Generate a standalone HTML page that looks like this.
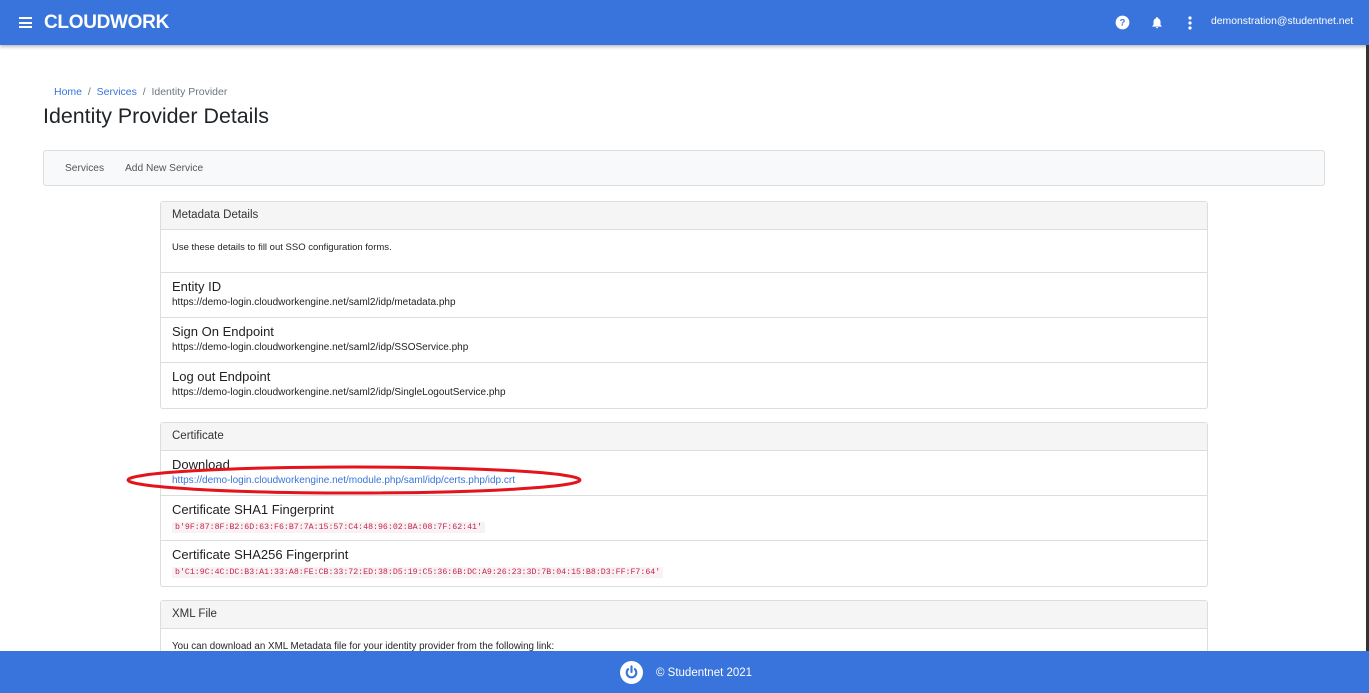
<!DOCTYPE html>
<html><head><style>
*{box-sizing:border-box;margin:0;padding:0}
body{width:1369px;height:693px;overflow:hidden;background:#fff;font-family:"Liberation Sans",sans-serif;color:#212529;position:relative}
.nav{position:absolute;top:0;left:0;width:1369px;height:45px;background:#3874db;box-shadow:0 2px 3px rgba(0,0,0,.25)}
.nav .brand{position:absolute;left:44px;top:12px;color:#fff;font-weight:bold;font-size:19px;letter-spacing:-0.3px}
.ham{position:absolute;left:19px;top:17px;width:13px}
.ham i{display:block;height:2px;background:#fff;margin-bottom:2.5px}
.user{position:absolute;left:1211px;top:16px;color:#fff;font-size:10.4px}
.abs{position:absolute}
.bc{position:absolute;left:54px;top:86px;font-size:10.5px;color:#6c757d}
.bc a{color:#3874db;text-decoration:none}
h1{position:absolute;left:43px;top:104px;font-size:21.4px;font-weight:normal}
.sub{position:absolute;left:43px;top:150px;width:1282px;height:36px;background:#f8f9fa;border:1px solid #ddd;border-radius:3px;font-size:10.2px;color:#555}
.sub span{position:absolute;top:12px}
.panel{position:absolute;left:160px;width:1048px;border:1px solid #ddd;border-radius:3px;background:#fff}
.ph{height:28px;background:#f5f5f5;border-bottom:1px solid #ddd;padding:7px 11px;font-size:11.5px;color:#333}
.row{height:45px;border-bottom:1px solid #ddd;padding:6px 11px;font-size:13px;color:#222}
.row:last-child{border-bottom:none}
.row small{display:block;font-size:10px;margin-top:3px;color:#222}
.row a{display:block;font-size:10px;margin-top:3px;color:#3874db;text-decoration:none}
code{display:inline-block;margin-top:4px;font-family:"Liberation Mono",monospace;font-size:8.25px;color:#c7254e;background:#f9f2f4;padding:1px 3px}
.foot{position:absolute;left:0;top:651px;width:1369px;height:42px;background:#3874db;color:#fff;font-size:11.5px}
</style></head><body>
<div class="nav">
<div class="ham"><i></i><i></i><i></i></div>
<div class="brand">CLOUDWORK</div>
<svg class="abs" style="left:1115px;top:15px" width="15" height="15" viewBox="0 0 24 24"><circle cx="12" cy="12" r="11" fill="#fff"/><text x="12" y="17" text-anchor="middle" font-size="15" font-weight="bold" fill="#3874db" font-family="Liberation Sans">?</text></svg>
<svg class="abs" style="left:1150px;top:15px" width="14" height="15" viewBox="0 0 24 24"><path d="M12 22a2 2 0 0 0 2-2h-4a2 2 0 0 0 2 2zm6-6V11c0-3-1.6-5.6-4.5-6.3V4a1.5 1.5 0 0 0-3 0v.7C7.6 5.4 6 8 6 11v5l-2 2v1h16v-1z" fill="#fff"/></svg>
<svg class="abs" style="left:1188px;top:16px" width="4" height="14"><circle cx="2" cy="2" r="1.6" fill="#fff"/><circle cx="2" cy="7" r="1.6" fill="#fff"/><circle cx="2" cy="12" r="1.6" fill="#fff"/></svg>
<div class="user">demonstration@studentnet.net</div>
</div>
<div class="bc"><a>Home</a> &nbsp;/&nbsp; <a>Services</a> &nbsp;/&nbsp; Identity Provider</div>
<h1>Identity Provider Details</h1>
<div class="sub"><span style="left:21px">Services</span><span style="left:81px">Add New Service</span></div>
<div class="panel" style="top:201px">
<div class="ph">Metadata Details</div>
<div style="height:43px;border-bottom:1px solid #ddd;padding:12px 11px;font-size:9.5px">Use these details to fill out SSO configuration forms.</div>
<div class="row">Entity ID<small>https://demo-login.cloudworkengine.net/saml2/idp/metadata.php</small></div>
<div class="row">Sign On Endpoint<small>https://demo-login.cloudworkengine.net/saml2/idp/SSOService.php</small></div>
<div class="row">Log out Endpoint<small>https://demo-login.cloudworkengine.net/saml2/idp/SingleLogoutService.php</small></div>
</div>
<div class="panel" style="top:422px">
<div class="ph">Certificate</div>
<div class="row">Download<a>https://demo-login.cloudworkengine.net/module.php/saml/idp/certs.php/idp.crt</a></div>
<div class="row">Certificate SHA1 Fingerprint<br><code>b'9F:87:8F:B2:6D:63:F6:B7:7A:15:57:C4:48:96:02:BA:08:7F:62:41'</code></div>
<div class="row">Certificate SHA256 Fingerprint<br><code>b'C1:9C:4C:DC:B3:A1:33:A8:FE:CB:33:72:ED:38:D5:19:C5:36:6B:DC:A9:26:23:3D:7B:04:15:B8:D3:FF:F7:64'</code></div>
</div>
<div class="panel" style="top:600px;height:80px">
<div class="ph">XML File</div>
<div style="padding:12px 11px;font-size:9.8px">You can download an XML Metadata file for your identity provider from the following link:</div>
</div>
<svg class="abs" style="left:125px;top:464px" width="458" height="32"><ellipse cx="229" cy="16" rx="226" ry="13" fill="none" stroke="#e3141b" stroke-width="3"/></svg>
<div class="foot">
<svg class="abs" style="left:620px;top:10px" width="23" height="23" viewBox="0 0 24 24"><circle cx="12" cy="12" r="12" fill="#fff"/><path d="M8.5 8.5a5 5 0 1 0 7 0" fill="none" stroke="#3874db" stroke-width="2.2" stroke-linecap="round"/><path d="M12 5.5v6" stroke="#3874db" stroke-width="2.2" stroke-linecap="round"/></svg>
<span class="abs" style="left:656px;top:16px">© Studentnet 2021</span>
</div>
<div class="abs" style="left:1366px;top:45px;width:3px;height:606px;background:#333"></div>
</body></html>
